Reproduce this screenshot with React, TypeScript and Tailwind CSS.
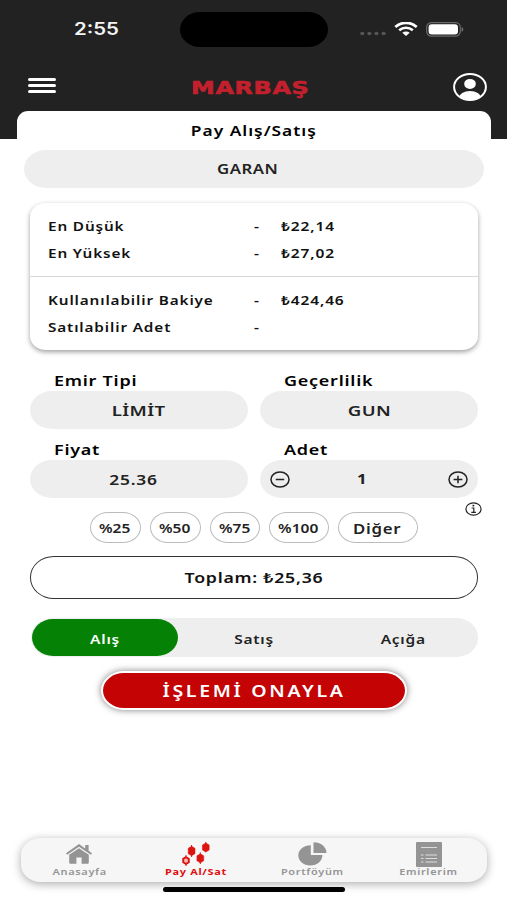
import { useState } from "react";
import type { ReactNode } from "react";

interface InfoRow {
  label: string;
  value: string;
}

const priceRows: InfoRow[] = [
  { label: "En Düşük", value: "₺22,14" },
  { label: "En Yüksek", value: "₺27,02" },
];

const balanceRows: InfoRow[] = [
  { label: "Kullanılabilir Bakiye", value: "₺424,46" },
  { label: "Satılabilir Adet", value: "" },
];

const percents = [
  { label: "%25", width: "w-[51px]" },
  { label: "%50", width: "w-[51px]" },
  { label: "%75", width: "w-[50px]" },
  { label: "%100", width: "w-[60px]" },
];

const sides = ["Alış", "Satış", "Açığa"];

// The app's typeface is wider than normal, so text is stretched sideways.
const Wide = ({
  children,
  className = "",
  stretch = "scale-x-[1.24]",
}: {
  children: ReactNode;
  className?: string;
  stretch?: string;
}) => (
  <span className={`inline-block whitespace-nowrap ${stretch} ${className}`}>
    {children}
  </span>
);

const StatusBar = () => (
  <div className="flex h-[58px] items-center">
    <div className="w-[180px] pl-[74px] pt-[2px] font-['Inter'] text-[17px] font-semibold text-[#f4f4f4]">
      <Wide className="origin-left" stretch="scale-x-[1.2]">
        2:55
      </Wide>
    </div>
    <div className="h-[35px] w-[148px] rounded-[20px/17.5px] bg-black" />
    <div className="flex flex-1 items-center">
      <svg className="ml-8 mt-[9px]" width="26" height="5" viewBox="0 0 26 5">
        <g fill="#555">
          <ellipse cx="2.3" cy="2.5" rx="2.1" ry="1.8" />
          <ellipse cx="9.4" cy="2.5" rx="2.1" ry="1.8" />
          <ellipse cx="16.5" cy="2.5" rx="2.1" ry="1.8" />
          <ellipse cx="23.6" cy="2.5" rx="2.1" ry="1.8" />
        </g>
      </svg>
      <svg className="ml-2" width="24" height="14" viewBox="0 0 24 14" fill="none">
        <path d="M1.3 5.1C7.3-.6 16.7-.6 22.7 5.1" stroke="#fff" strokeWidth="2.7" />
        <path d="M5.2 8.2c3.9-3.4 9.7-3.4 13.6 0" stroke="#fff" strokeWidth="2.5" />
        <path d="M8.3 10.8c2.2-1.7 5.2-1.7 7.4 0L12 14z" fill="#fff" />
      </svg>
      <svg className="ml-2" width="38" height="15" viewBox="0 0 38 15">
        <rect x=".7" y=".7" width="33.6" height="13.4" rx="4.6" fill="none" stroke="#6a6a6a" strokeWidth="1.2" />
        <rect x="2.6" y="2.3" width="29.4" height="10.2" rx="3.2" fill="#fff" />
        <path d="M35.7 5c2 .8 2 4 0 4.8z" fill="#777" />
      </svg>
    </div>
  </div>
);

const Field = ({ label, children }: { label: string; children: ReactNode }) => (
  <div className="w-[218px]">
    <div className="flex h-[21px] items-center pl-6 text-[14.5px] tracking-[0.6px] text-black">
      <Wide className="origin-left">{label}</Wide>
    </div>
    <div className="flex h-[38px] items-center justify-center rounded-[22px/19px] bg-[#eee] text-[15px] tracking-[0.3px] text-[#222]">
      {children}
    </div>
  </div>
);

const InfoLines = ({ rows }: { rows: InfoRow[] }) => (
  <div>
    {rows.map((row) => (
      <div key={row.label} className="flex h-[27px] items-center pl-[18px]">
        <div className="w-[206px]">
          <Wide className="origin-left" stretch="scale-x-[1.225]">
            {row.label}
          </Wide>
        </div>
        <div className="w-[27px]">
          <Wide className="origin-left">-</Wide>
        </div>
        <Wide className="origin-left">{row.value}</Wide>
      </div>
    ))}
  </div>
);

const HomeIcon = () => (
  <svg width="26" height="20" viewBox="0 0 26 20" fill="#949494">
    <path d="M13 0 0 9.2l1.2 1.6L13 2.8l11.8 8L26 9.2l-3.400-2.400V1h-3.400v3.400z" />
    <path d="M13 4.200 3.200 10.800v7.400c0 1 .6 1.600 1.600 1.600h5.600v-6.300h5.200v6.300h5.600c1 0 1.600-.6 1.600-1.600v-7.400z" />
  </svg>
);

const CandlesIcon = () => (
  <svg width="28" height="24" viewBox="0 0 28 24" fill="#dc1410" stroke="#dc1410">
    <path d="M4 13V24M9.600 3v12M18.300 10.500v11.500M23.800 0v10" strokeWidth="1" />
    <path d="M9.600 4.300l3.400 2v5.400l-3.400 2-3.400-2V6.300zM18.300 11.800l3.400 2v5l-3.400 2-3.400-2v-5zM23.800 1l3.400 2v5l-3.400 2-3.400-2V3z" strokeWidth=".5" />
    <path d="M4 15.200l2.800 1.700v3.400L4 22l-2.800-1.700v-3.400z" fill="#f7b5b3" strokeWidth="1.900" />
  </svg>
);

const PieIcon = () => (
  <svg width="29" height="24" viewBox="0 0 29 24" fill="#949494">
    <path d="M12.800 3.200v9.800h11.600c0 6-5.200 10.500-12 10.500C5.400 23.500.3 19 .3 13.300.3 7.700 5.600 3.200 12.800 3.200z" />
    <path d="M15.500.3c7.400 0 13 4.600 13 10.700h-13z" />
  </svg>
);

const ListIcon = () => (
  <svg width="26" height="25" viewBox="0 0 26 25">
    <rect width="26" height="25" rx="1" fill="#949494" />
    <path d="M5 5.500h16M9.500 13h11.500M9.500 16.500h11.500M9.500 20h11.500M5 13h2.500M5 16.500h2.500M5 20h2.500" stroke="#ddd" strokeWidth="1.200" />
  </svg>
);

const navItems = [
  { label: "Anasayfa", icon: <HomeIcon /> },
  { label: "Pay Al/Sat", icon: <CandlesIcon /> },
  { label: "Portföyüm", icon: <PieIcon /> },
  { label: "Emirlerim", icon: <ListIcon /> },
];

const App = () => {
  const [side, setSide] = useState("Alış");
  const [amount, setAmount] = useState(1);

  return (
    <div className="flex h-[900px] w-[507px] flex-col overflow-hidden bg-[linear-gradient(#222_139.5px,#fff_139.5px)] font-['Noto_Sans',sans-serif] font-semibold">
      <StatusBar />

      <header className="flex h-[53px] items-center justify-between pl-7 pr-5 pt-[5px]">
        <button aria-label="Menü" className="mt-[-3px] flex w-[28px] flex-col gap-[3px]">
          <span className="h-[3px] rounded-full bg-white" />
          <span className="h-[3px] rounded-full bg-white" />
          <span className="h-[3px] rounded-full bg-white" />
        </button>
        <div className="mr-[9px] mt-[3px] font-['DejaVu_Sans'] text-[17px] font-bold leading-none tracking-[0.5px] text-[#c3202d] [-webkit-text-stroke:0.6px_#c3202d]">
          <Wide stretch="scale-x-[1.4]">MARBAŞ</Wide>
        </div>
        <svg width="34" height="28" viewBox="0 0 34 28">
          <clipPath id="avatar">
            <ellipse cx="17" cy="14" rx="15.500" ry="12.700" />
          </clipPath>
          <g clipPath="url(#avatar)" fill="#fff">
            <ellipse cx="17" cy="10.900" rx="5.800" ry="5" />
            <ellipse cx="17" cy="25" rx="11" ry="6.900" />
          </g>
          <ellipse cx="17" cy="14" rx="15.900" ry="13" fill="none" stroke="#fff" strokeWidth="2" />
        </svg>
      </header>

      <main className="ml-[17px] mr-4 rounded-t-[11px] bg-white px-[13px]">
        <h1 className="flex h-[39px] items-center justify-center text-[14px] tracking-[0.8px] text-black">
          <Wide>Pay Alış/Satış</Wide>
        </h1>

        <div className="-mx-[6px] flex h-[38px] items-center justify-center rounded-[22px/19px] bg-[#eee] pr-3 text-[13.500px] tracking-[0.4px] text-[#222]">
          <Wide>GARAN</Wide>
        </div>

        <section className="mt-[15px] h-[147px] rounded-[16px/14px] bg-white text-[12.500px] tracking-[0.7px] text-[#111] shadow-[0_2px_5px_rgba(0,0,0,0.38)]">
          <div className="h-[74px] border-b border-[#d8d8d8] pt-[11px]">
            <InfoLines rows={priceRows} />
          </div>
          <div className="pt-[11px]">
            <InfoLines rows={balanceRows} />
          </div>
        </section>

        <div className="mt-5 flex justify-between">
          <Field label="Emir Tipi">
            <Wide>LİMİT</Wide>
          </Field>
          <Field label="Geçerlilik">
            <Wide>GUN</Wide>
          </Field>
        </div>

        <div className="mt-[10px] flex justify-between">
          <Field label="Fiyat">
            <Wide className="mr-3 text-[14px] tracking-[0.6px]">25.36</Wide>
          </Field>
          <Field label="Adet">
            <div className="flex w-full items-center px-[10px]">
              <button aria-label="Azalt" onClick={() => setAmount(Math.max(1, amount - 1))}>
                <svg width="20" height="17" viewBox="0 0 20 17" fill="none" stroke="#222" strokeWidth="1.500">
                  <ellipse cx="10" cy="8.500" rx="9" ry="7.500" />
                  <path d="M5.800 8.500h8.400" />
                </svg>
              </button>
              <div className="flex-1 pr-[13px] pt-px text-center text-[13.500px] font-bold">
                <Wide>{amount}</Wide>
              </div>
              <button aria-label="Artır" onClick={() => setAmount(amount + 1)}>
                <svg width="20" height="17" viewBox="0 0 20 17" fill="none" stroke="#222" strokeWidth="1.500">
                  <ellipse cx="10" cy="8.500" rx="9" ry="7.500" />
                  <path d="M5.600 8.500h8.800M10 4.800v7.400" />
                </svg>
              </button>
            </div>
          </Field>
        </div>

        <div className="flex h-[45px] items-start pl-[60px]">
          <div className="flex flex-1 gap-[9px] pt-[14px] text-[12.500px] text-[#222]">
            {percents.map((item) => (
              <button
                key={item.label}
                className={`flex h-[31px] items-center justify-center rounded-[18px/15.500px] border border-[#bbb] pr-px pt-[3px] ${item.width}`}
              >
                <Wide>{item.label}</Wide>
              </button>
            ))}
            <button className="flex h-[31px] w-[80px] items-center justify-center rounded-[18px/15.500px] border border-[#bbb] pr-px pt-px text-[14px] tracking-[0.6px]">
              <Wide stretch="scale-x-[1.2]">Diğer</Wide>
            </button>
          </div>
          <svg className="-mr-[4px] mt-[4px]" width="17" height="14" viewBox="0 0 17 14" fill="none" stroke="#222" strokeWidth="1.200">
            <ellipse cx="8.500" cy="7" rx="7.600" ry="6.200" />
            <path d="M6.600 6h2.200v4.200M6.300 10.300h4.600" />
            <path d="M7.500 3.600h1.800" strokeWidth="1.600" />
          </svg>
        </div>

        <div className="mt-[13px] flex h-[43px] items-center justify-center rounded-[24px/21px] border border-[#333] pt-px text-[14.300px] tracking-[0.6px] text-[#111]">
          <Wide>Toplam: ₺25,36</Wide>
        </div>

        <div className="ml-[1px] mt-[19px] flex h-[39px] items-center rounded-[22px/19px] bg-[#eee] pl-px text-[12.500px] tracking-[0.6px] text-[#222]">
          {sides.map((item) => (
            <button
              key={item}
              onClick={() => setSide(item)}
              className={`flex h-[37px] items-center justify-center rounded-[21px/18.500px] pt-[5px] last:w-auto last:flex-1 ${
                item === side ? "w-[146px] bg-[#058205] text-white" : "w-[151px]"
              }`}
            >
              <Wide>{item}</Wide>
            </button>
          ))}
        </div>

        <button className="mx-auto mt-[14px] flex h-[39px] w-[306px] items-center justify-center rounded-[23px/19.500px] border-2 border-white bg-[#c40404] text-[16px] tracking-[2.200px] text-white shadow-[0_0_7px_rgba(0,0,0,0.5)]">
          <Wide stretch="scale-x-[1.22]">İŞLEMİ ONAYLA</Wide>
        </button>
      </main>

      <nav className="ml-[21px] mt-auto grid h-[44px] w-[466px] grid-cols-4 rounded-[20px/17px] bg-[#f6f6f6] shadow-[0_2px_10px_rgba(0,0,0,0.33)]">
        {navItems.map((item, index) => (
          <a key={item.label} href="#" className="flex flex-col items-center">
            <span className="flex h-[29px] items-center pt-[3px]">{item.icon}</span>
            <span
              className={`text-[9.500px] leading-[10px] tracking-[0.6px] ${
                index === 1 ? "font-bold text-[#e00f0f]" : "text-[#949494]"
              }`}
            >
              <Wide stretch="scale-x-[1.15]">{item.label}</Wide>
            </span>
          </a>
        ))}
      </nav>
      <div className="mb-2 ml-[163px] mt-[5px] h-[5px] w-[182px] shrink-0 rounded-full bg-black" />
    </div>
  );
};

export default App;
